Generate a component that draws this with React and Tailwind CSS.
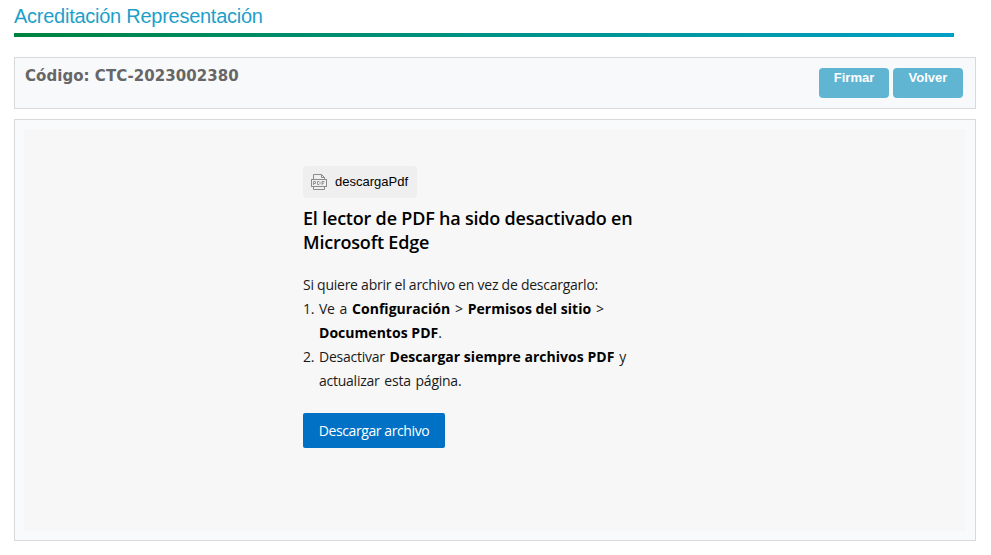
export default function App() {
  const seg = { fontFamily: '"Open Sans", "Noto Sans", sans-serif' };
  const B = ({ children }) => <b className="font-bold text-black tracking-[0.03px] [word-spacing:0px]">{children}</b>;
  return (
    <div className="w-[991px] h-[555px] overflow-hidden bg-white flex flex-col pl-[14px] pr-[15px]">
      <h1 className="h-[33px] pt-[5px] text-[20px] leading-[23px] tracking-[-0.26px] text-[#1e9fc9] font-['Liberation_Sans',sans-serif] font-normal">
        Acreditación Representación
      </h1>
      <div className="w-[940px] h-[4px] shrink-0 bg-gradient-to-r from-[#00833e] to-[#009fc7]" />
      <div className="mt-[20px] h-[52px] shrink-0 border border-[#d9d9d9] bg-[#f8f9fb] flex justify-between pl-[10px] pr-[12px] pt-[10px]">
        <div className="text-[15px] leading-[16px] font-bold tracking-[0.05px] text-[#666] font-['DejaVu_Sans',sans-serif]">Código: CTC-2023002380</div>
        <div className="flex gap-[4px]">
          {["Firmar", "Volver"].map((t) => (
            <button key={t} className="w-[70px] h-[30px] rounded-[4px] bg-[#60b5d3] text-white text-[13px] leading-[18px] font-bold pb-[11px] font-['Liberation_Sans',sans-serif]">{t}</button>
          ))}
        </div>
      </div>
      <div className="mt-[10px] h-[422px] shrink-0 border border-[#d9d9d9] bg-[#f9fafc] p-[9px]">
        <div className="h-full bg-[#f7f7f7] pl-[279px] pt-[37px] text-[#1a1a1a]" style={seg}>
          <div className="flex items-center h-[32px] w-[114px] rounded-[4px] bg-[#efefef] pl-[8px] gap-[8px] text-black font-['Liberation_Sans',sans-serif] text-[13px]">
            <svg width="16" height="16" viewBox="0 0 16 16" fill="none" stroke="#8c8c8c" strokeWidth="1" className="shrink-0">
              <path d="M2.5 5.5V0.5H10.5L13.5 3.5V5.5M10.5 0.5V3.5H13.5M2.5 12.5V15.5H13.5V12.5" />
              <rect x="0.5" y="5.5" width="15" height="7" />
              <path d="M2.5 11V7.5H4.5V9.5H2.5M6.5 7.5V10.5H8L9 9.5V8.5L8 7.5H6.5M13.5 7.5H11V11M11 9.2H13" strokeWidth="0.9" />
            </svg>
            <span>descargaPdf</span>
          </div>
          <h2 className="w-[340px] mt-[8px] text-[18px] leading-[24px] font-semibold text-black tracking-[-0.2px]">
            El lector de PDF ha sido desactivado en Microsoft Edge
          </h2>
          <div className="w-[340px] mt-[19px] text-[14px] leading-[24px] tracking-[-0.25px]">
            <p>Si quiere abrir el archivo en vez de descargarlo:</p>
            <div className="flex [word-spacing:1.5px]">
              <span className="w-[16px] shrink-0">1.</span>
              <span>Ve a <B>Configuración</B> &gt; <B>Permisos del sitio</B> &gt; <B>Documentos PDF</B>.</span>
            </div>
            <div className="flex [word-spacing:1.5px]">
              <span className="w-[16px] shrink-0">2.</span>
              <span>Desactivar <B>Descargar siempre archivos PDF</B> y actualizar esta página.</span>
            </div>
          </div>
          <button className="mt-[20px] w-[142px] h-[35px] rounded-[2px] bg-[#0071c5] text-white text-[14px] tracking-[-0.4px]">Descargar archivo</button>
        </div>
      </div>
    </div>
  );
}
